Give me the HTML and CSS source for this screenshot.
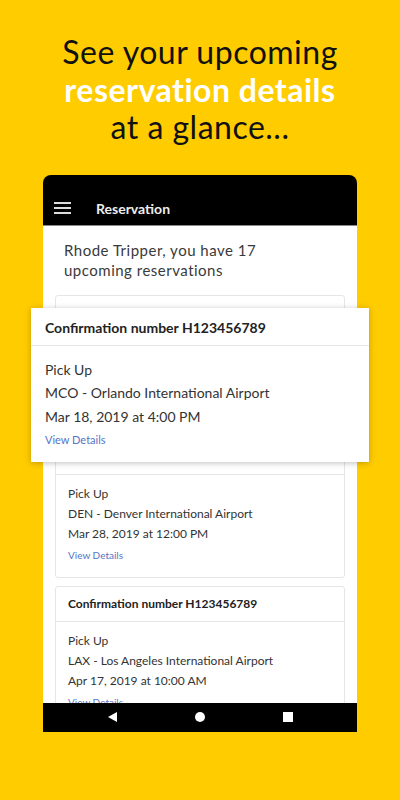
FILE: index.html
```html
<!DOCTYPE html>
<html lang="en">
<head>
    <meta charset="UTF-8">
    <meta name="viewport" content="width=device-width, initial-scale=1.0">
    <title>Reservations</title>
    <link rel="stylesheet" href="styles.css">
</head>
<body>
    <h1 class="promo-title">See your upcoming<br><strong>reservation details</strong><br>at a glance...</h1>

    <div class="phone">
        <div class="app-bar">
            <span class="menu-icon"><span></span><span></span><span></span></span>
            <span class="app-title">Reservation</span>
        </div>

        <div class="screen">
            <p class="greeting">Rhode Tripper, you have 17 upcoming reservations</p>

            <div class="card card-under">
                <div class="card-head">Confirmation number H123456789</div>
                <div class="card-body">
                    <p>Pick Up</p>
                    <p>MCO - Orlando International Airport</p>
                    <p>Mar 18, 2019 at 4:00 PM</p>
                    <a href="#" class="details-link">View Details</a>
                </div>
            </div>

            <div class="card">
                <div class="card-head">Confirmation number H123456789</div>
                <div class="card-body">
                    <p>Pick Up</p>
                    <p>DEN - Denver International Airport</p>
                    <p>Mar 28, 2019 at 12:00 PM</p>
                    <a href="#" class="details-link">View Details</a>
                </div>
            </div>

            <div class="card">
                <div class="card-head">Confirmation number H123456789</div>
                <div class="card-body">
                    <p>Pick Up</p>
                    <p>LAX - Los Angeles International Airport</p>
                    <p>Apr 17, 2019 at 10:00 AM</p>
                    <a href="#" class="details-link">View Details</a>
                </div>
            </div>
        </div>

        <div class="nav-bar">
            <span class="nav-back"></span>
            <span class="nav-home"></span>
            <span class="nav-recent"></span>
        </div>

        <!-- enlarged copy of the first card, floating over the list -->
        <div class="card card-zoom">
            <div class="card-head">Confirmation number H123456789</div>
            <div class="card-body">
                <p>Pick Up</p>
                <p>MCO - Orlando International Airport</p>
                <p>Mar 18, 2019 at 4:00 PM</p>
                <a href="#" class="details-link">View Details</a>
            </div>
        </div>
    </div>
</body>
</html>
```

FILE: styles.css
```css
body {
    margin: 0;
    background-color: #ffcc00;
    font-family: Lato, "Noto Sans", sans-serif;
    color: #333;
    min-height: 800px;
}

.promo-title {
    margin: 0;
    padding-top: 33px;
    text-align: center;
    font-size: 32px;
    line-height: 37.5px;
    font-weight: 400;
    letter-spacing: 0.5px;
    color: #111;
}

.promo-title strong {
    color: #fff;
    font-weight: 700;
}

.phone {
    position: relative;
    width: 314px;
    margin: 29px auto 0;
}

.app-bar {
    display: flex;
    align-items: center;
    height: 50px;
    padding: 0 11px;
    background-color: #000;
    border-radius: 8px 8px 0 0;
    border-bottom: 1px solid #8a8a8a;
}

.menu-icon {
    display: flex;
    flex-direction: column;
    gap: 3px;
    width: 17px;
    margin-top: 16px;
}

.menu-icon span {
    height: 2px;
    background-color: #ddd;
}

.app-title {
    margin-left: 25px;
    margin-top: 18px;
    font-size: 14px;
    font-weight: 700;
    color: #eee;
}

.screen {
    height: 477px;
    overflow: hidden;
    background-color: #fff;
}

.greeting {
    margin: 0;
    padding: 14px 70px 15px 21px;
    font-size: 15px;
    line-height: 20px;
    letter-spacing: 0.5px;
    color: #3a3a3a;
}

.card {
    margin: 0 12px 8px;
    background-color: #fff;
    border: 1px solid #e6e6e6;
    border-radius: 3px;
}

.card-head {
    height: 34px;
    line-height: 34px;
    padding-left: 12px;
    font-size: 12px;
    font-weight: 700;
    color: #222;
    border-bottom: 1px solid #e6e6e6;
}

.card-body {
    padding: 9px 12px 14px;
}

.card-under .card-body {
    padding-bottom: 11px;
}

.card-body p {
    margin: 0;
    font-size: 12px;
    line-height: 20px;
    color: #333;
}

.details-link {
    display: block;
    margin-top: 3px;
    font-size: 10px;
    line-height: 16px;
    color: #5673c7;
    text-decoration: none;
}

.nav-bar {
    display: flex;
    align-items: center;
    justify-content: center;
    gap: 78px;
    height: 29px;
    background-color: #000;
}

.nav-back {
    width: 0;
    height: 0;
    border-top: 5px solid transparent;
    border-bottom: 5px solid transparent;
    border-right: 9px solid #fff;
}

.nav-home {
    width: 10px;
    height: 10px;
    border-radius: 50%;
    background-color: #fff;
}

.nav-recent {
    width: 10px;
    height: 10px;
    background-color: #fff;
}

.card-zoom {
    position: absolute;
    top: 133px;
    left: -12px;
    width: 338px;
    margin: 0;
    border: none;
    border-radius: 0;
    box-shadow: 0 1px 6px rgba(0, 0, 0, 0.25);
}

.card-zoom .card-head {
    height: 37px;
    line-height: 39px;
    padding-left: 14px;
    font-size: 14px;
}

.card-zoom .card-body {
    padding: 12px 14px 12px;
}

.card-zoom .card-body p {
    font-size: 14px;
    line-height: 23.5px;
}

.card-zoom .details-link {
    margin-top: 2px;
    font-size: 11px;
    line-height: 20px;
}
```
